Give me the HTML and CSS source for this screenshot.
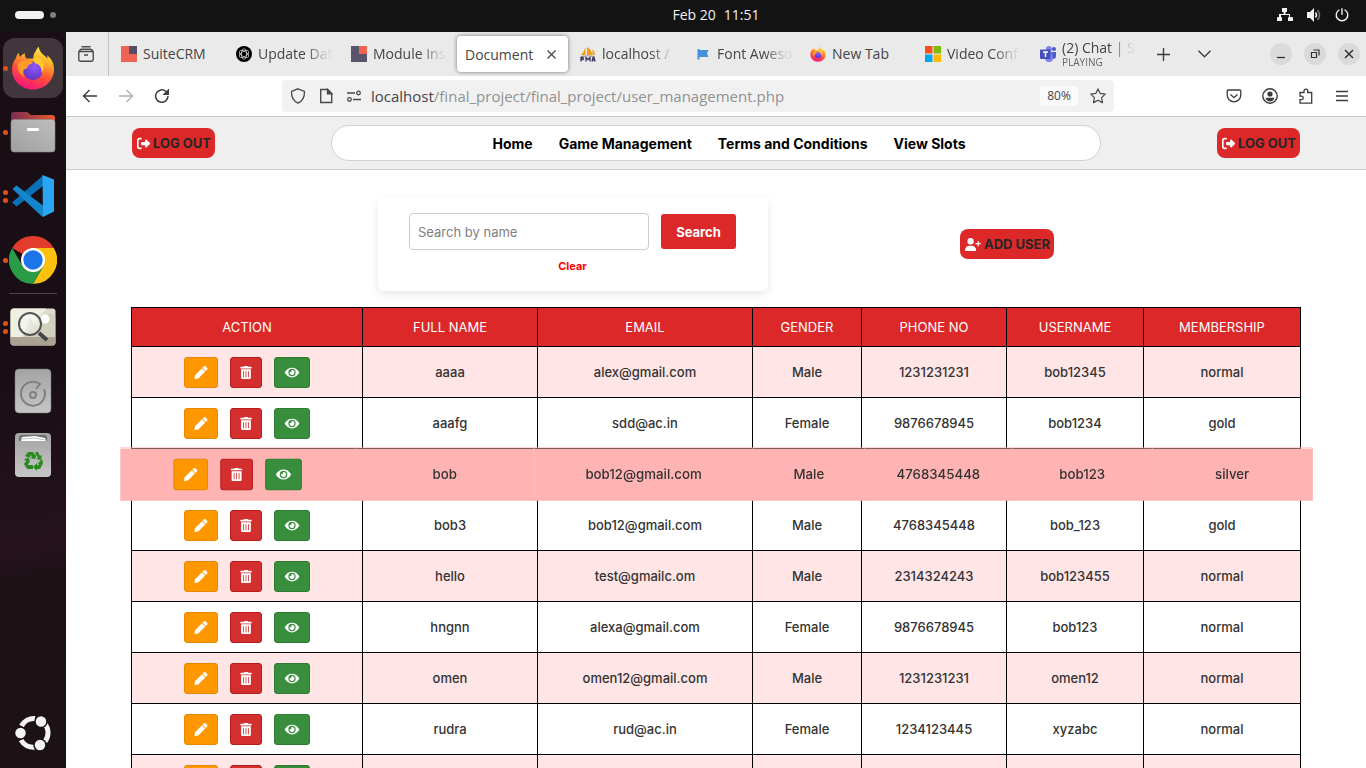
FILE: index.html
```html
<!DOCTYPE html>
<html lang="en">
<head>
<meta charset="utf-8">
<meta name="viewport" content="width=device-width, initial-scale=1">
<title>Document</title>
<link rel="stylesheet" href="styles.css">
</head>
<body>
<svg class="defs" aria-hidden="true">
  <defs>
    <linearGradient id="ff-body" x1="0.75" y1="0" x2="0.35" y2="1"><stop offset="0" stop-color="#fff44f"/><stop offset="0.3" stop-color="#ffb22b"/><stop offset="0.6" stop-color="#ff5634"/><stop offset="1" stop-color="#f5117e"/></linearGradient>
    <radialGradient id="ff-globe" cx="0.6" cy="0.3" r="0.8"><stop offset="0" stop-color="#9059ff"/><stop offset="1" stop-color="#5b2fc0"/></radialGradient>
    <linearGradient id="metal" x1="0" y1="0" x2="0" y2="1"><stop offset="0" stop-color="#a3a3a3"/><stop offset="1" stop-color="#c6c6c6"/></linearGradient>
    <linearGradient id="folder-back" x1="0" y1="0" x2="1" y2="0"><stop offset="0" stop-color="#7a2c54"/><stop offset="1" stop-color="#e8592b"/></linearGradient>
    <linearGradient id="folder-front" x1="0" y1="1" x2="1" y2="0"><stop offset="0" stop-color="#a0a0a0"/><stop offset="1" stop-color="#bdbdbd"/></linearGradient>
  </defs>
  <symbol id="firefox" viewBox="0 0 44 44">
    <path fill="url(#ff-body)" d="M22 43.500C10 43.500 1 34.500 1 23c0-5 2-8.500 4-11 .2-1.700 1.500-4.500 3-5 0 2 .5 3.300 1 4 1.500-2.300 3.500-3.500 5-3.500-.4 2.500.5 4 1.500 5h7C21.500 9 25 4.500 27.500.500c.5 4 3 7 6.500 9.500l2.500 2.500c0-1.500 0-2.500-.5-3.500 4.500 3.500 7 8.500 7 14 0 11.500-9 20.500-21 20.500z"/>
    <circle cx="22" cy="24.500" r="9.500" fill="url(#ff-globe)"/>
    <path fill="#ff9b2a" d="M7 17.500c3-2.500 6-3 9-2.500l6 .5c0 2.500-3.500 2.500-5 4.500-.7 1.500-.5 3-4 3.500-2 2.500-1 6 1 8-5-2-8.500-8-7-14z"/>
    <path fill="#ffc72f" d="M22 12c5-1.500 9 1 10 5 1.500 3 .5 8-1.500 10 .5-5-2-9-6-9.500-1.500-.5-2-3-2.500-5.500z"/>
  </symbol>
  <symbol id="logout" viewBox="0 0 512 512"><path d="M377.900 105.900L500.700 228.700c7.200 7.200 11.300 17.100 11.300 27.300s-4.100 20.100-11.300 27.300L377.900 406.100c-6.400 6.400-15 9.900-24 9.900c-18.700 0-33.900-15.200-33.900-33.900l0-62.100-128 0c-17.700 0-32-14.300-32-32l0-64c0-17.700 14.300-32 32-32l128 0 0-62.100c0-18.700 15.200-33.900 33.900-33.900c9 0 17.600 3.600 24 9.900zM160 96L96 96c-17.700 0-32 14.300-32 32l0 256c0 17.700 14.300 32 32 32l64 0c17.700 0 32 14.300 32 32s-14.300 32-32 32l-64 0c-53 0-96-43-96-96L0 128C0 75 43 32 96 32l64 0c17.700 0 32 14.300 32 32s-14.300 32-32 32z"/></symbol>
  <symbol id="user-plus" viewBox="0 0 640 512"><path d="M96 128a128 128 0 1 1 256 0A128 128 0 1 1 96 128zM0 482.300C0 383.800 79.800 304 178.300 304l91.400 0C368.200 304 448 383.800 448 482.300c0 16.400-13.300 29.700-29.700 29.700L29.700 512C13.300 512 0 498.700 0 482.300zM504 312l0-64-64 0c-13.300 0-24-10.700-24-24s10.700-24 24-24l64 0 0-64c0-13.300 10.700-24 24-24s24 10.700 24 24l0 64 64 0c13.300 0 24 10.700 24 24s-10.700 24-24 24l-64 0 0 64c0 13.300-10.700 24-24 24s-24-10.700-24-24z"/></symbol>
  <symbol id="pencil" viewBox="0 0 512 512"><path d="M497.900 142.100l-46.100 46.100c-4.700 4.700-12.300 4.700-17 0l-111-111c-4.700-4.700-4.700-12.300 0-17l46.100-46.100c18.700-18.700 49.100-18.700 67.900 0l60.100 60.100c18.800 18.700 18.800 49.100 0 67.900zM284.200 99.800L21.600 362.400.4 483.900c-2.900 16.400 11.400 30.600 27.800 27.800l121.500-21.300 262.600-262.600c4.700-4.700 4.700-12.300 0-17l-111-111c-4.800-4.700-12.400-4.700-17.100 0z"/></symbol>
  <symbol id="trash" viewBox="0 0 448 512"><path d="M32 464a48 48 0 0 0 48 48h288a48 48 0 0 0 48-48V128H32zm272-256a16 16 0 0 1 32 0v224a16 16 0 0 1-32 0zm-96 0a16 16 0 0 1 32 0v224a16 16 0 0 1-32 0zm-96 0a16 16 0 0 1 32 0v224a16 16 0 0 1-32 0zM432 32H312l-9.400-18.700A24 24 0 0 0 281.100 0H166.800a23.720 23.720 0 0 0-21.400 13.300L136 32H16A16 16 0 0 0 0 48v32a16 16 0 0 0 16 16h416a16 16 0 0 0 16-16V48a16 16 0 0 0-16-16z"/></symbol>
  <symbol id="eye" viewBox="0 0 576 512"><path d="M572.520 241.400C518.290 135.590 410.930 64 288 64S57.680 135.640 3.480 241.410a32.350 32.350 0 0 0 0 29.190C57.710 376.410 165.070 448 288 448s230.320-71.640 284.520-177.410a32.350 32.350 0 0 0 0-29.190zM288 400a144 144 0 1 1 144-144 143.930 143.930 0 0 1-144 144zm0-240a95.310 95.310 0 0 0-25.310 3.790 47.850 47.850 0 0 1-66.900 66.900A95.780 95.780 0 1 0 288 160z"/></symbol>
</svg>

<div class="desktop">
  <header class="system-bar">
    <div class="workspaces"><span class="workspace-active"></span><span class="workspace"></span></div>
    <div class="clock"><span>Feb 20</span><span>11:51</span></div>
    <div class="tray">
      <svg width="16" height="14" viewBox="0 0 16 14"><path fill="#f2f2f2" d="M5 0h5v4H8.500v2H13v3h2a1 1 0 0 1 1 1v3h-5v-3a1 1 0 0 1 1-1V7H4v2a1 1 0 0 1 1 1v3H0v-3a1 1 0 0 1 1-1h1V6h4.500V4H5z"/></svg>
      <svg width="16" height="14" viewBox="0 0 16 14"><path fill="#f2f2f2" d="M1 4h3l4-4v14l-4-4H1z"/><path d="M9.500 4.500q2 2.500 0 5" fill="none" stroke="#f2f2f2" stroke-width="1.500"/><path d="M11.500 2q4 5 0 10" fill="none" stroke="#777" stroke-width="1.500"/></svg>
      <svg width="14" height="14" viewBox="0 0 14 14" fill="none" stroke="#f2f2f2" stroke-width="1.400" stroke-linecap="round"><path d="M7 .8v5.500M4 2a5.800 5.800 0 1 0 6 0"/></svg>
    </div>
  </header>

  <div class="workarea">
    <nav class="dock" aria-label="Dock">
      <button class="dock-item" aria-label="Firefox"><span class="dots"><i></i></span><span class="tile"><svg width="44" height="44"><use href="#firefox"/></svg></span></button>
      <button class="dock-item" aria-label="Files"><span class="dots"><i></i></span>
        <svg width="46" height="42" viewBox="0 0 46 42"><path fill="url(#folder-back)" d="M1 4q0-3 3-3h13l4 3h21q3 0 3 3v12H1z"/><rect x="1" y="8.500" width="44" height="32.500" rx="3" fill="url(#folder-front)" stroke="#8b8b8b" stroke-width=".6"/><rect x="17" y="17" width="12" height="3" rx="1" fill="#fff"/></svg></button>
      <button class="dock-item" aria-label="Visual Studio Code"><span class="dots"><i></i><i></i></span>
        <svg width="42" height="42" viewBox="0 0 42 42"><path fill="#0a70b8" d="M31 .5 0 27.500 4.500 31.500 31 11z"/><path fill="#1686cc" d="M4.500 10.500.5 14 30 41.500h1.500V31z"/><path fill="#2aa5f2" d="M30.500 0 42 4.500v32L31 42z"/></svg></button>
      <button class="dock-item" aria-label="Chrome"><span class="dots"><i></i></span>
        <svg width="48" height="48" viewBox="0 0 48 48"><path fill="#e33b2e" d="M24 24 3.200 12A24 24 0 0 1 44.800 12z"/><path fill="#fcc10f" d="M24 12h20.800A24 24 0 0 1 24 48l10.400-18z"/><path fill="#2a9c48" d="M3.200 12A24 24 0 0 0 24 48l10.400-18H13.600z"/><circle cx="24" cy="24" r="12" fill="#fff"/><circle cx="24" cy="24" r="9.700" fill="#1b74e8"/></svg></button>
      <hr class="dock-line">
      <button class="dock-item" aria-label="Image Viewer"><span class="dots"><i></i><i></i></span>
        <svg width="46" height="38" viewBox="0 0 46 38"><rect x=".5" y=".5" width="45" height="37" rx="3" fill="#dcdccb"/><path fill="#efefe4" d="M3 .5h33L13 30H.5V3z"/><path fill="#c9c9b4" d="m20 10 7 9 13-14 5.500 4v20h-33z" opacity=".6"/><path fill="#aba291" d="M.5 29h45v5q0 3.500-3 3.500h-39q-3 0-3-3.500z"/><circle cx="35" cy="11" r="4.500" fill="#fff"/><circle cx="20" cy="16" r="11" fill="#fff" fill-opacity=".4" stroke="#555" stroke-width="2"/><path d="m29 25 8 7" stroke="#444" stroke-width="4"/></svg></button>
      <button class="dock-item" aria-label="Disk">
        <svg width="38" height="46" viewBox="0 0 38 46"><rect x="1" y="1" width="36" height="44" rx="4" fill="url(#metal)" stroke="#757575" stroke-width=".5"/><g fill="none" stroke="#808080" stroke-width="2"><path d="M30 21a12 12 0 1 1-4-5l-4 5"/><circle cx="19" cy="27" r="3"/></g></svg></button>
      <button class="dock-item" aria-label="Trash">
        <svg width="38" height="46" viewBox="0 0 38 46"><rect x="1" y="1" width="36" height="44" rx="4" fill="url(#metal)"/><path d="M5 9V6q0-3 3-3h22q3 0 3 3v3z" fill="#707070"/><path d="m7 9 1-4 13-1 10 2 1 3z" fill="#fff"/><path d="m8 7 13-1 10 2" fill="none" stroke="#999" stroke-width=".6"/><g fill="#2a8a1e"><path d="m14 20 5-.1 2 3 2-1-2 5-5-1 2-1-1-2-2 3-4-2z"/><path d="m21 20 3 0 2 4 2-1-1 5-5-1 2-1zM10 27l5-1 1 5-1-1-1 3h5v4h-6l-3-5 2-3zM28 27l1 4-3 6h-3v2l-4-4 4-4v2h2l-1-2z"/></g></svg></button>
      <button class="dock-item dock-apps" aria-label="Show Applications">
        <svg width="36" height="36" viewBox="0 0 36 36"><g fill="none" stroke="#f4f4f4" stroke-width="5"><path d="M6.500 11A14 14 0 0 1 20 3.500M29.500 8.500a14 14 0 0 1 .5 18M20 32A14 14 0 0 1 6 25"/></g><g fill="#f4f4f4" stroke="#1c1016" stroke-width="1.500"><circle cx="5.500" cy="18" r="6"/><circle cx="26" cy="6.500" r="6"/><circle cx="25" cy="30" r="6"/></g></svg></button>
    </nav>

    <div class="browser">
      <div class="tab-strip">
        <button class="recent" aria-label="Recent browsing"><svg width="16" height="16" viewBox="0 0 16 16" fill="none" stroke="#4a4a4a" stroke-width="1.400"><path d="M3.500 .7h9M1.700 5.200q0-2 2-2h8.600q2 0 2 2M.8 5.500h14.400v8a1.700 1.700 0 0 1-1.700 1.700h-11A1.700 1.700 0 0 1 .8 13.500zM6 9h4"/></svg></button>
        <div class="tabs">
          <button class="tab"><svg width="16" height="16"><path fill="#ee6352" d="M0 0h16v16H0z"/><path fill="#534d64" d="M8 0h8v8H8z"/></svg><span class="tab-label">SuiteCRM</span></button>
          <button class="tab"><svg width="16" height="16" viewBox="0 0 16 16"><circle cx="8" cy="8" r="8"/><g fill="none" stroke="#fff" stroke-width=".6"><ellipse cx="8" cy="8" rx="2.600" ry="5.200"/><ellipse cx="8" cy="8" rx="2.600" ry="5.200" transform="rotate(60 8 8)"/><ellipse cx="8" cy="8" rx="2.600" ry="5.200" transform="rotate(120 8 8)"/></g></svg><span class="tab-label fade">Update Dat</span></button>
          <button class="tab"><svg width="16" height="16"><path fill="#5a546b" d="M0 0h16v16H0z"/><path fill="#f4634f" d="M8 0h8v8H8z"/></svg><span class="tab-label fade">Module Ins</span></button>
          <button class="tab tab-active"><span>Document</span><svg width="9" height="9" viewBox="0 0 9 9" stroke="#444" stroke-width="1.200"><path d="m.5.500 8 8M8.500.500l-8 8"/></svg></button>
          <button class="tab"><svg width="16" height="16" viewBox="0 0 16 16"><path fill="#f89c0e" d="M5.500 1v8H1q3-3 4.500-8zM7 1q5 3 5 8H7zM12.500 3q2.500 3 2.500 6h-2.500z"/><path d="M1 10.500q6-1.500 14 0" stroke="#999" fill="none"/><path d="M1 15.500v-4h2q1 1 0 2H1M6 15.500v-4l2 2 2-2v4M12 15.500l1-4h1l1 4m-3-1.500h3" stroke="#3a3560" stroke-width="1.300" fill="none"/></svg><span class="tab-label fade">localhost /</span></button>
          <button class="tab"><svg width="16" height="16" viewBox="0 0 16 16"><path fill="#4390e0" d="M2.500 3h2v1h9l-1.500 3.500 1.500 3.500h-9v2.500h-2z"/></svg><span class="tab-label fade">Font Aweso</span></button>
          <button class="tab"><svg width="16" height="16"><use href="#firefox"/></svg><span class="tab-label">New Tab</span></button>
          <button class="tab"><svg width="16" height="16"><path fill="#f4511e" d="M0 0h7.500v7.500H0z"/><path fill="#80bb0a" d="M8.500 0H16v7.500H8.500z"/><path fill="#05a6f0" d="M0 8.500h7.500V16H0z"/><path fill="#ffb900" d="M8.500 8.500H16V16H8.500z"/></svg><span class="tab-label fade">Video Conf</span></button>
          <button class="tab"><svg width="16" height="16" viewBox="0 0 16 16"><circle cx="9" cy="3" r="3" fill="#7b83eb"/><circle cx="14" cy="3" r="2" fill="#5059c9"/><path fill="#7b83eb" d="M5 6h8v6a4 4 0 0 1-8 0z"/><path fill="#5059c9" d="M12 6h4v4q0 3-3 3z"/><rect y="3.500" width="10.500" height="9.500" rx="1" fill="#4750bb"/><path stroke="#fff" stroke-width="1.400" d="M3 6h5M5.500 6v5"/></svg><span class="tab-label tab-label-two fade"><span>(2) Chat | S</span><small>PLAYING</small></span></button>
        </div>
        <button class="strip-button" aria-label="New tab"><svg width="13" height="13" stroke="#3c3c3c" stroke-width="1.400"><path d="M6.500 0v13M0 6.500h13"/></svg></button>
        <button class="strip-button" aria-label="List tabs"><svg width="13" height="8" viewBox="0 0 13 8" fill="none" stroke="#3c3c3c" stroke-width="1.400"><path d="m.5.800 6 6 6-6"/></svg></button>
        <div class="window-buttons">
          <button aria-label="Minimize"><svg width="10" height="10" stroke="#333" stroke-width="1.300"><path d="M1 8.500h8"/></svg></button>
          <button aria-label="Restore"><svg width="10" height="10" viewBox="0 0 10 10" fill="none" stroke="#333" stroke-width="1.200"><path d="M1.500 3.500h5v5h-5zM3.500 1h5.500v5.500"/></svg></button>
          <button aria-label="Close"><svg width="10" height="10" stroke="#333" stroke-width="1.500"><path d="m1 1 8 8M9 1 1 9"/></svg></button>
        </div>
      </div>

      <div class="toolbar">
        <div class="history-buttons">
          <button aria-label="Back"><svg width="16" height="16" viewBox="0 0 16 16" fill="none" stroke="#3c3c3c" stroke-width="1.400"><path d="M15 8H1.500M7.500 2l-6 6 6 6"/></svg></button>
          <button aria-label="Forward"><svg width="16" height="16" viewBox="0 0 16 16" fill="none" stroke="#b0b0b0" stroke-width="1.400"><path d="M1 8h13.500M8.500 2l6 6-6 6"/></svg></button>
          <button aria-label="Reload"><svg width="16" height="16" viewBox="0 0 16 16" fill="none" stroke="#3c3c3c" stroke-width="1.500"><path d="M14 8a6.200 6.200 0 1 1-2-4.500l1.500 1.500"/><path fill="#3c3c3c" stroke="none" d="M15 .5V7H8.500z"/></svg></button>
        </div>
        <div class="url-bar">
          <svg width="16" height="16" viewBox="0 0 16 16" fill="none" stroke="#4a4a4a" stroke-width="1.300"><path d="m8 .8 6.500 2.700c.2 5.500-2 9.500-6.500 11.700C3.500 13 1.300 9 1.500 3.500z"/></svg>
          <svg width="16" height="16" viewBox="0 0 16 16" fill="none" stroke="#4a4a4a" stroke-width="1.400"><path d="M2.700 1.500h7l4 4v9h-11z"/><path fill="#4a4a4a" d="M9.500 1.500v4.200h4.200z"/></svg>
          <svg width="16" height="16" viewBox="0 0 16 16" fill="none" stroke="#4a4a4a" stroke-width="1.300"><path d="M1 5h8M7 11.500h8"/><circle cx="12.500" cy="5" r="1.800"/><circle cx="3.500" cy="11.500" r="1.800"/></svg>
          <div class="url"><span class="url-host">localhost</span>/final_project/final_project/user_management.php</div>
          <button class="zoom-level">80%</button>
          <button class="star" aria-label="Bookmark"><svg width="16" height="16" viewBox="0 0 16 16" fill="none" stroke="#4a4a4a" stroke-width="1.200" stroke-linejoin="round"><path d="m8 .9 2.200 4.500 5 .7-3.600 3.500.9 5L8 12.200l-4.500 2.400.9-5L.8 6.100l5-.7z"/></svg></button>
        </div>
        <div class="tool-buttons">
          <button aria-label="Pocket"><svg width="16" height="16" viewBox="0 0 16 16" fill="none" stroke="#3c3c3c" stroke-width="1.300"><path d="M1.200 3q0-1 1-1h11.600q1 0 1 1v4a6.800 6.800 0 0 1-13.600 0zM4.500 6.500 8 9.700l3.500-3.200"/></svg></button>
          <button aria-label="Account"><svg width="16" height="16" viewBox="0 0 16 16"><circle cx="8" cy="8" r="7.200" fill="none" stroke="#3c3c3c" stroke-width="1.400"/><circle cx="8" cy="6" r="2.600" fill="#3c3c3c"/><path fill="#3c3c3c" d="M3.500 9.800h9q-1 3.700-4.500 3.700t-4.500-3.700z"/></svg></button>
          <button aria-label="Extensions"><svg width="16" height="16" viewBox="0 0 16 16" fill="none" stroke="#3c3c3c" stroke-width="1.300"><path d="M2 4.500h4V3a1.800 1.800 0 0 1 3.700 0v1.500h4v10.700H2v-3.500h1.500a1.700 1.700 0 0 0 0-3.500H2z"/></svg></button>
          <button aria-label="Menu"><svg width="16" height="16" stroke="#3c3c3c" stroke-width="1.300"><path d="M2 3.500h12M2 8h12M2 12.500h12"/></svg></button>
        </div>
      </div>

      <div class="page">
        <header class="site-header">
          <a class="pill" href="#"><svg class="pill-icon" width="13" height="13"><use href="#logout"/></svg>LOG OUT</a>
          <nav class="site-nav">
            <a href="#">Home</a>
            <a href="#">Game Management</a>
            <a href="#">Terms and Conditions</a>
            <a href="#">View Slots</a>
          </nav>
          <a class="pill" href="#"><svg class="pill-icon" width="13" height="13"><use href="#logout"/></svg>LOG OUT</a>
        </header>

        <main class="content">
          <div class="controls">
            <form class="search-card">
              <div class="search-row">
                <input class="search-input" type="text" placeholder="Search by name" aria-label="Search by name">
                <button class="search-button" type="button">Search</button>
              </div>
              <a class="clear" href="#">Clear</a>
            </form>
            <a class="pill" href="#"><svg class="pill-icon" width="16" height="13"><use href="#user-plus"/></svg>ADD USER</a>
          </div>

          <table class="users">
            <colgroup><col class="col-action"><col class="col-name"><col class="col-email"><col class="col-gender"><col class="col-phone"><col class="col-username"><col class="col-membership"></colgroup>
            <thead>
              <tr><th>ACTION</th><th>FULL NAME</th><th>EMAIL</th><th>GENDER</th><th>PHONE NO</th><th>USERNAME</th><th>MEMBERSHIP</th></tr>
            </thead>
            <tbody>
              <tr>
                <td><div class="actions"><button class="act edit" aria-label="Edit"><svg width="14" height="13"><use href="#pencil"/></svg></button><button class="act delete" aria-label="Delete"><svg width="12" height="13"><use href="#trash"/></svg></button><button class="act view" aria-label="View"><svg width="16" height="13"><use href="#eye"/></svg></button></div></td>
                <td>aaaa</td><td>alex@gmail.com</td><td>Male</td><td>1231231231</td><td>bob12345</td><td>normal</td>
              </tr>
              <tr>
                <td><div class="actions"><button class="act edit" aria-label="Edit"><svg width="14" height="13"><use href="#pencil"/></svg></button><button class="act delete" aria-label="Delete"><svg width="12" height="13"><use href="#trash"/></svg></button><button class="act view" aria-label="View"><svg width="16" height="13"><use href="#eye"/></svg></button></div></td>
                <td>aaafg</td><td>sdd@ac.in</td><td>Female</td><td>9876678945</td><td>bob1234</td><td>gold</td>
              </tr>
              <tr class="hovered">
                <td><div class="actions"><button class="act edit" aria-label="Edit"><svg width="14" height="13"><use href="#pencil"/></svg></button><button class="act delete" aria-label="Delete"><svg width="12" height="13"><use href="#trash"/></svg></button><button class="act view" aria-label="View"><svg width="16" height="13"><use href="#eye"/></svg></button></div></td>
                <td>bob</td><td>bob12@gmail.com</td><td>Male</td><td>4768345448</td><td>bob123</td><td>silver</td>
              </tr>
              <tr>
                <td><div class="actions"><button class="act edit" aria-label="Edit"><svg width="14" height="13"><use href="#pencil"/></svg></button><button class="act delete" aria-label="Delete"><svg width="12" height="13"><use href="#trash"/></svg></button><button class="act view" aria-label="View"><svg width="16" height="13"><use href="#eye"/></svg></button></div></td>
                <td>bob3</td><td>bob12@gmail.com</td><td>Male</td><td>4768345448</td><td>bob_123</td><td>gold</td>
              </tr>
              <tr>
                <td><div class="actions"><button class="act edit" aria-label="Edit"><svg width="14" height="13"><use href="#pencil"/></svg></button><button class="act delete" aria-label="Delete"><svg width="12" height="13"><use href="#trash"/></svg></button><button class="act view" aria-label="View"><svg width="16" height="13"><use href="#eye"/></svg></button></div></td>
                <td>hello</td><td>test@gmailc.om</td><td>Male</td><td>2314324243</td><td>bob123455</td><td>normal</td>
              </tr>
              <tr>
                <td><div class="actions"><button class="act edit" aria-label="Edit"><svg width="14" height="13"><use href="#pencil"/></svg></button><button class="act delete" aria-label="Delete"><svg width="12" height="13"><use href="#trash"/></svg></button><button class="act view" aria-label="View"><svg width="16" height="13"><use href="#eye"/></svg></button></div></td>
                <td>hngnn</td><td>alexa@gmail.com</td><td>Female</td><td>9876678945</td><td>bob123</td><td>normal</td>
              </tr>
              <tr>
                <td><div class="actions"><button class="act edit" aria-label="Edit"><svg width="14" height="13"><use href="#pencil"/></svg></button><button class="act delete" aria-label="Delete"><svg width="12" height="13"><use href="#trash"/></svg></button><button class="act view" aria-label="View"><svg width="16" height="13"><use href="#eye"/></svg></button></div></td>
                <td>omen</td><td>omen12@gmail.com</td><td>Male</td><td>1231231231</td><td>omen12</td><td>normal</td>
              </tr>
              <tr>
                <td><div class="actions"><button class="act edit" aria-label="Edit"><svg width="14" height="13"><use href="#pencil"/></svg></button><button class="act delete" aria-label="Delete"><svg width="12" height="13"><use href="#trash"/></svg></button><button class="act view" aria-label="View"><svg width="16" height="13"><use href="#eye"/></svg></button></div></td>
                <td>rudra</td><td>rud@ac.in</td><td>Female</td><td>1234123445</td><td>xyzabc</td><td>normal</td>
              </tr>
              <tr>
                <td><div class="actions"><button class="act edit" aria-label="Edit"><svg width="14" height="13"><use href="#pencil"/></svg></button><button class="act delete" aria-label="Delete"><svg width="12" height="13"><use href="#trash"/></svg></button><button class="act view" aria-label="View"><svg width="16" height="13"><use href="#eye"/></svg></button></div></td>
                <td></td><td></td><td></td><td></td><td></td><td></td>
              </tr>
            </tbody>
          </table>
        </main>
      </div>
    </div>
  </div>
</div>
</body>
</html>
```
FILE: styles.css
```css
* { box-sizing: border-box; }
body { margin: 0; font-family: Inter, "Liberation Sans", sans-serif; }
button { font: inherit; color: inherit; margin: 0; padding: 0; border: 0; background: none; }
a { text-decoration: none; }
svg { display: block; flex: none; }
.defs { position: absolute; width: 0; height: 0; }

.desktop { display: flex; flex-direction: column; height: 100vh; overflow: hidden; }

/* System bar */
.system-bar {
  display: grid; grid-template-columns: 66px 1fr auto 1fr; align-items: center;
  flex: none; height: 32px; padding-bottom: 2px;
  background: #131313; color: #f2f2f2;
  font: 14px/20px "Open Sans", sans-serif;
}
.workspaces { display: flex; align-items: center; gap: 6px; padding-left: 15px; }
.workspace-active { width: 29px; height: 8px; border-radius: 4px; background: #f2f2f2; }
.workspace { width: 6px; height: 6px; border-radius: 50%; background: #808080; }
.clock { display: flex; gap: 8px; grid-column: 3; }
.tray { display: flex; justify-content: flex-end; align-items: center; gap: 13px; padding-right: 17px; }

.workarea { display: flex; flex: 1; min-height: 0; }

/* Dock */
.dock {
  display: flex; flex-direction: column; flex: none; width: 66px;
  padding: 4px 0 3px;
  background: linear-gradient(170deg, #190e14 0%, #190e15 45%, #25121d 70%, #1d1116 74%, #1c1216 100%);
}
.dock-item { position: relative; display: flex; align-items: center; justify-content: center; height: 64px; }
.dock-apps { margin-top: auto; }
.tile { display: flex; align-items: center; justify-content: center; width: 60px; height: 60px; border-radius: 12px; background: #41363b; }
.dots { position: absolute; left: 3px; top: 0; bottom: 0; display: flex; flex-direction: column; justify-content: center; gap: 3px; }
.dots i { width: 5px; height: 5px; border-radius: 50%; background: #e0501a; }
.dock-line { width: 48px; height: 1px; margin: 1px auto; border: 0; background: #4b4247; }

/* Browser chrome */
.browser { display: flex; flex-direction: column; flex: 1; min-width: 0; color: #454545; font-family: "Open Sans", sans-serif; }
.tab-strip { display: flex; align-items: center; flex: none; height: 44px; background: #eaeaea; font-size: 14px; }
.recent { display: flex; align-items: center; justify-content: center; flex: none; width: 43px; height: 44px; padding-right: 2px; border-right: 1px solid #c2c2c2; }
.tabs { display: flex; align-items: center; flex: 0 1 auto; min-width: 0; height: 44px; }
.tab { display: flex; align-items: center; flex: 0 1 115px; min-width: 0; gap: 6px; height: 36px; padding: 0 4px 0 12px; text-align: left; }
.tab-label { flex: 1; min-width: 0; white-space: nowrap; line-height: 20px; }
.fade { mask-image: linear-gradient(to right, #000 62%, rgba(0, 0, 0, .1) 90%); }
.tab-label-two { display: flex; flex-direction: column; line-height: 16px; }
.tab-label-two small { font-size: 10px; line-height: 13px; color: #666; }
.tab-active { flex-basis: 111px; width: 111px; justify-content: space-between; margin-left: 3px; padding: 0 12px 0 8px; border-radius: 4px; background: #fff; box-shadow: 0 0 4px rgba(0, 0, 0, .5); }
.tab:not(.tab-active) { width: 115px; }
.strip-button { display: flex; align-items: center; justify-content: center; width: 41px; height: 36px; }
.window-buttons { display: flex; gap: 12px; margin-left: auto; padding-right: 6px; }
.window-buttons button { display: flex; align-items: center; justify-content: center; width: 22px; height: 22px; border-radius: 50%; background: #dadada; }

.toolbar { display: flex; align-items: center; flex: none; height: 41px; padding-bottom: 1px; border-bottom: 1px solid #c6c6c6; background: #fff; }
.history-buttons { display: flex; gap: 20px; flex: none; width: 216px; padding-left: 16px; }
.url-bar { display: flex; align-items: center; gap: 12px; flex: 0 1 832px; min-width: 0; height: 32px; padding: 0 8px; border-radius: 4px; background: #f1f1f1; }
.url { flex: 1; min-width: 0; overflow: hidden; margin-left: -3px; color: #919191; font-size: 15px; line-height: 20px; white-space: nowrap; }
.url-host { color: #454545; }
.zoom-level { width: 38px; height: 20px; border-radius: 3px; background: #fafafa; font-size: 12px; }
.tool-buttons { display: flex; justify-content: flex-end; gap: 20px; flex: 1; padding-right: 16px; }

/* Site */
.page { flex: 1; min-height: 0; overflow: hidden; background: #fff; font-family: Inter, "Liberation Sans", sans-serif; }
.site-header { display: flex; align-items: center; justify-content: space-between; height: 53px; padding: 0 66px; border-bottom: 1px solid #cfcfcf; background: #efefef; }
.pill { display: inline-flex; align-items: center; gap: 3px; height: 30px; padding: 0 4px 0 5px; border-radius: 8px; background: #dc2828; color: #262626; font-size: 13px; font-weight: 700; white-space: nowrap; }
.pill-icon { fill: #fff; }
.site-nav { display: flex; align-items: center; justify-content: center; gap: 26px; flex: 0 1 770px; height: 36px; padding-left: 26px; border: 1px solid #d0d0d0; border-radius: 18px; background: #fff; }
.site-nav a { color: #000; font-size: 14px; font-weight: 700; white-space: nowrap; }

.content { padding: 27px 65px 0; }
.controls { display: flex; align-items: center; justify-content: center; gap: 192px; margin-bottom: 16px; }
.search-card { display: flex; flex-direction: column; align-items: center; width: 390px; height: 94px; padding: 16px 32px 0 31px; border-radius: 6px; background: #fff; box-shadow: 0 3px 8px rgba(0, 0, 0, .1); }
.search-row { display: flex; align-items: center; gap: 12px; width: 100%; }
.search-input { flex: 1; min-width: 0; height: 37px; padding: 0 8px; border: 1px solid #ccc; border-radius: 4px; background: #fff; color: #333; font: 13px Inter, sans-serif; }
.search-input::placeholder { color: #808080; opacity: 1; }
.search-button { width: 75px; height: 35px; border-radius: 3px; background: #dc2828; color: #fff; font-size: 13px; font-weight: 700; }
.clear { margin-top: 8px; color: #f00; font-size: 11px; font-weight: 700; line-height: 16px; }

.users { width: 100%; border: solid #000; border-width: 1px 0 0 1px; border-collapse: separate; border-spacing: 0; table-layout: fixed; color: #333; font-size: 13px; text-align: center; }
.col-action { width: 231px; }
.col-name { width: 175px; }
.col-email { width: 215px; }
.col-gender { width: 109px; }
.col-phone { width: 145px; }
.col-username { width: 137px; }
.col-membership { width: 157px; }
.users th, .users td { padding: 0; border: solid #000; border-width: 0 1px 1px 0; }
.users th { height: 39px; background: #dc2828; color: #fff; font-weight: 400; }
.users td { height: 51px; font-weight: 500; }
.users tbody tr:nth-child(odd) { background: #ffe5e5; }
.users tbody tr.hovered { background: #ffb3b3; transform: scale(1.02); }
.users .hovered td { border-color: #ffb3b3; box-shadow: 0 -1px #ffb3b3; }
.actions { display: flex; justify-content: center; gap: 12px; }
.act { display: flex; align-items: center; justify-content: center; height: 31px; border: 1px solid; border-radius: 3px; }
.act svg { fill: #fff; }
.edit { width: 34px; background: #ff9800; border-color: #e68900; }
.delete { width: 32px; background: #d32f2f; border-color: #b71c1c; }
.view { width: 36px; background: #388e3c; border-color: #2e7d32; }
```
